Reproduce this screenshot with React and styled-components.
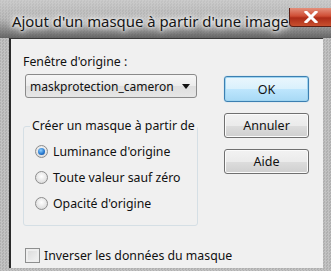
import React from "react";
import styled, { createGlobalStyle } from "styled-components";

const Global = createGlobalStyle`
  html, body { margin: 0; padding: 0; }
  body { font-family: "Noto Sans", "Open Sans", sans-serif; }
`;

const Screen = styled.div`
  width: 331px;
  height: 271px;
  overflow: hidden;
  display: flex;
  flex-direction: column;
  background-color: #b9b9b9;
  background-image: repeating-conic-gradient(#c2c2c2 0 25%, #b0b0b0 0 50%);
  background-size: 3px 3px;
`;

const TitleBar = styled.div`
  height: 38px;
  flex: none;
  display: flex;
  align-items: flex-start;
  justify-content: space-between;
  padding-left: 12px;
  padding-right: 8px;
  background: linear-gradient(to bottom, rgba(210,210,210,0.6) 0%, rgba(170,170,170,0.3) 50%, rgba(80,80,80,0.8) 100%);
`;

const Title = styled.div`
  font-size: 14.9px;
  line-height: 22px;
  color: #151515;
  margin-top: 10px;
  white-space: nowrap;
  text-shadow: 0 0 9px #f0f0f0, 0 0 9px #f0f0f0, 0 0 5px #f4f4f4, 0 0 3px #f4f4f4;
`;

const CloseButton = styled.div`
  width: 45px;
  height: 19px;
  margin-top: 8px;
  flex: none;
  box-sizing: border-box;
  border: 1px solid #5a1e14;
  border-top: none;
  border-radius: 0 0 4px 4px;
  background: linear-gradient(to bottom, #e4907c 0%, #cf4d34 45%, #ad2c18 55%, #c8502f 100%);
  display: flex;
  align-items: center;
  justify-content: center;
`;

const Client = styled.div`
  margin-left: 9px;
  width: 314px;
  height: 230px;
  box-sizing: border-box;
  background: #f0f0f0;
  border-left: 2px solid #2a2a2a;
  border-top: 1px solid #3a3a3a;
  display: flex;
  font-size: 12.3px;
  color: #111;
`;

const LeftColumn = styled.div`
  display: flex;
  flex-direction: column;
  padding-left: 12px;
  width: 186px;
`;

const Label = styled.div`
  margin-top: 14px;
  height: 18px;
  line-height: 18px;
`;

const Select = styled.div`
  margin-top: 3px;
  margin-left: 2px;
  width: 172px;
  height: 24px;
  box-sizing: border-box;
  border: 1px solid #8a8a8a;
  border-radius: 3px;
  background: linear-gradient(to bottom, #f6f6f6 0%, #ececec 50%, #dedede 51%, #e6e6e6 100%);
  display: flex;
  align-items: center;
  padding-left: 4px;
  padding-right: 6px;
  justify-content: space-between;
  font-size: 12px;
  white-space: nowrap;
`;

const Arrow = styled.span`
  width: 0;
  height: 0;
  border-left: 4px solid transparent;
  border-right: 4px solid transparent;
  border-top: 5px solid #111;
  margin-top: 1px;
`;

const GroupBox = styled.fieldset`
  margin: 20px 0 0 0;
  width: 170px;
  height: 108px;
  box-sizing: border-box;
  border: 1px solid #d5dfe5;
  border-radius: 3px;
  padding: 7px 0 0 11px;
  display: flex;
  flex-direction: column;
  gap: 5px;
`;

const Legend = styled.legend`
  padding: 0 2px;
  margin-left: -5px;
  font-size: 12.3px;
  line-height: 16px;
  white-space: nowrap;
`;

const OptionRow = styled.label`
  display: flex;
  align-items: center;
  gap: 5px;
  height: 21px;
  white-space: nowrap;
`;

const Radio = styled.span`
  width: 13px;
  height: 13px;
  border-radius: 50%;
  box-sizing: border-box;
  border: 1px solid #8d8d8d;
  background: radial-gradient(circle at 50% 40%, #ffffff 0%, #e4e4e4 60%, #cfcfcf 100%);
  display: flex;
  align-items: center;
  justify-content: center;
  flex: none;
`;

const RadioDot = styled.span`
  width: 7px;
  height: 7px;
  border-radius: 50%;
  background: radial-gradient(circle at 40% 35%, #8fd0ff 0%, #2a7bd0 55%, #0f3f88 100%);
`;

const CheckRow = styled.label`
  display: flex;
  align-items: center;
  gap: 4px;
  margin-top: 21px;
  margin-left: 2px;
  white-space: nowrap;
`;

const Checkbox = styled.span`
  width: 15px;
  height: 15px;
  box-sizing: border-box;
  border: 1px solid #8e8f8f;
  background: linear-gradient(135deg, #d8d8d8 0%, #f4f4f4 100%);
  box-shadow: inset 0 0 0 2px #eeeeee;
  flex: none;
`;

const RightColumn = styled.div`
  display: flex;
  flex-direction: column;
  gap: 11px;
  padding-top: 37px;
  padding-left: 15px;
`;

const Button = styled.div`
  width: 85px;
  height: ${(p) => (p.$default ? 26 : 25)}px;
  box-sizing: border-box;
  border: 1px solid ${(p) => (p.$default ? "#3c7fb1" : "#707070")};
  border-radius: 3px;
  background: ${(p) =>
    p.$default
      ? "linear-gradient(to bottom, #eaf6fd 0%, #d9f0fc 50%, #bee6fd 51%, #a7d9f5 100%)"
      : "linear-gradient(to bottom, #f2f2f2 0%, #ebebeb 50%, #dddddd 51%, #cfcfcf 100%)"};
  box-shadow: ${(p) =>
    p.$default ? "inset 0 0 0 1px #9fd4f0, 0 0 1px #60b8e8" : "inset 0 0 0 1px #fbfbfb"};
  display: flex;
  align-items: center;
  justify-content: center;
  font-size: 12.5px;
  color: #111;
`;

export default function App() {
  return (
    <>
      <Global />
      <Screen>
        <TitleBar>
          <Title>Ajout d'un masque à partir d'une image</Title>
          <CloseButton>
            <svg width="16" height="12" viewBox="0 0 16 12">
              <path d="M3 1 L13 11 M13 1 L3 11" stroke="#fff" strokeWidth="3" strokeLinecap="square" />
            </svg>
          </CloseButton>
        </TitleBar>
        <Client>
          <LeftColumn>
            <Label>Fenêtre d'origine :</Label>
            <Select>
              <span>maskprotection_cameron</span>
              <Arrow />
            </Select>
            <GroupBox>
              <Legend>Créer un masque à partir de</Legend>
              <OptionRow>
                <Radio>
                  <RadioDot />
                </Radio>
                Luminance d'origine
              </OptionRow>
              <OptionRow>
                <Radio />
                Toute valeur sauf zéro
              </OptionRow>
              <OptionRow>
                <Radio />
                Opacité d'origine
              </OptionRow>
            </GroupBox>
            <CheckRow>
              <Checkbox />
              Inverser les données du masque
            </CheckRow>
          </LeftColumn>
          <RightColumn>
            <Button $default>OK</Button>
            <Button>Annuler</Button>
            <Button>Aide</Button>
          </RightColumn>
        </Client>
      </Screen>
    </>
  );
}
